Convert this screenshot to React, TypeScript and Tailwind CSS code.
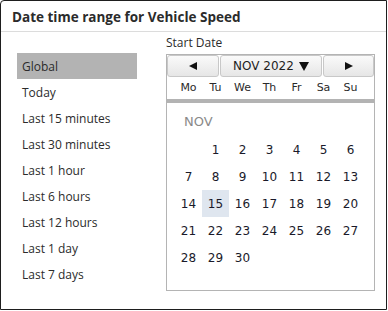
const ranges = [
  "Global",
  "Today",
  "Last 15 minutes",
  "Last 30 minutes",
  "Last 1 hour",
  "Last 6 hours",
  "Last 12 hours",
  "Last 1 day",
  "Last 7 days",
];

const weekDays = ["Mo", "Tu", "We", "Th", "Fr", "Sa", "Su"];

// Nov 2022 starts on a Tuesday
const days: (number | null)[] = [null, ...Array.from({ length: 30 }, (_, i) => i + 1)];

const ui = { fontFamily: '"Segoe UI", "Open Sans", "Noto Sans", sans-serif' };
const tahoma = { fontFamily: 'Tahoma, "DejaVu Sans", sans-serif' };

function Triangle({ dir }: { dir: "left" | "right" | "down" }) {
  const points = dir === "left" ? "8,0 8,8 0,4" : dir === "right" ? "0,0 0,8 8,4" : "0,0 10,0 5,9";
  return (
    <svg width={dir === "down" ? 10 : 8} height={dir === "down" ? 9 : 8} viewBox={dir === "down" ? "0 0 10 9" : "0 0 8 8"}>
      <polygon points={points} fill="#111" />
    </svg>
  );
}

function Calendar() {
  return (
    <div className="w-[209px] border border-[#b4b4b4] bg-white" style={tahoma}>
      <div className="flex h-[22px] gap-[1px] text-[12px] text-[#1e1e1e]">
        <button className="flex w-[52px] items-center justify-center rounded-[3px] border border-[#c8c8c8] bg-gradient-to-b from-[#fafafa] to-[#e6e6e6]">
          <Triangle dir="left" />
        </button>
        <button className="flex flex-1 items-center justify-center gap-[5px] rounded-[3px] border border-[#c8c8c8] bg-gradient-to-b from-[#fafafa] to-[#e6e6e6]">
          NOV 2022 <Triangle dir="down" />
        </button>
        <button className="flex w-[51px] items-center justify-center rounded-[3px] border border-[#c8c8c8] bg-gradient-to-b from-[#fafafa] to-[#e6e6e6]">
          <Triangle dir="right" />
        </button>
      </div>
      <div className="grid h-[22px] grid-cols-[repeat(7,27px)] items-center pl-[8px] text-[11px] text-[#2a2a2a]">
        {weekDays.map((d) => (
          <span key={d} className="text-center">
            {d}
          </span>
        ))}
      </div>
      <div className="h-[4px] bg-[#b3b3b3]" />
      <div className="h-[33px] pl-[17px] pt-[10px] text-[13px] leading-[18px] text-[#8a8a8a]">NOV</div>
      <div className="grid grid-cols-[repeat(7,27px)] pb-[19px] pl-[8px] text-[12px] text-[#1a1a2a]">
        {days.map((d, i) => (
          <span
            key={i}
            className={
              "flex h-[27px] items-center justify-center " + (d === 15 ? "bg-[#dfe6ef]" : "")
            }
          >
            {d ?? ""}
          </span>
        ))}
      </div>
    </div>
  );
}

export default function App() {
  return (
    <div className="h-[311px] w-[388px] bg-white" style={ui}>
      <div className="flex h-[310px] w-[387px] flex-col rounded-tl-[4px] border border-[#1e1e1e] text-[#2b2b2b]">
        <div className="flex h-[31px] items-center border-b border-[#dcdcdc] pl-[11px] pt-[3px] text-[13.5px] font-bold">
          Date time range for Vehicle Speed
        </div>
        <div className="flex">
          <div className="w-[165px] pl-[16px] pt-[21px]">
            {ranges.map((r, i) => (
              <div
                key={r}
                className={
                  "flex h-[26px] w-[120px] items-center pl-[5px] pt-[2px] text-[12px] " +
                  (i === 0 ? "bg-[#b3b3b3]" : "")
                }
              >
                {r}
              </div>
            ))}
          </div>
          <div className="pt-[2px]">
            <div className="h-[20px] text-[12px] leading-[18px]">Start Date</div>
            <Calendar />
          </div>
        </div>
      </div>
    </div>
  );
}
